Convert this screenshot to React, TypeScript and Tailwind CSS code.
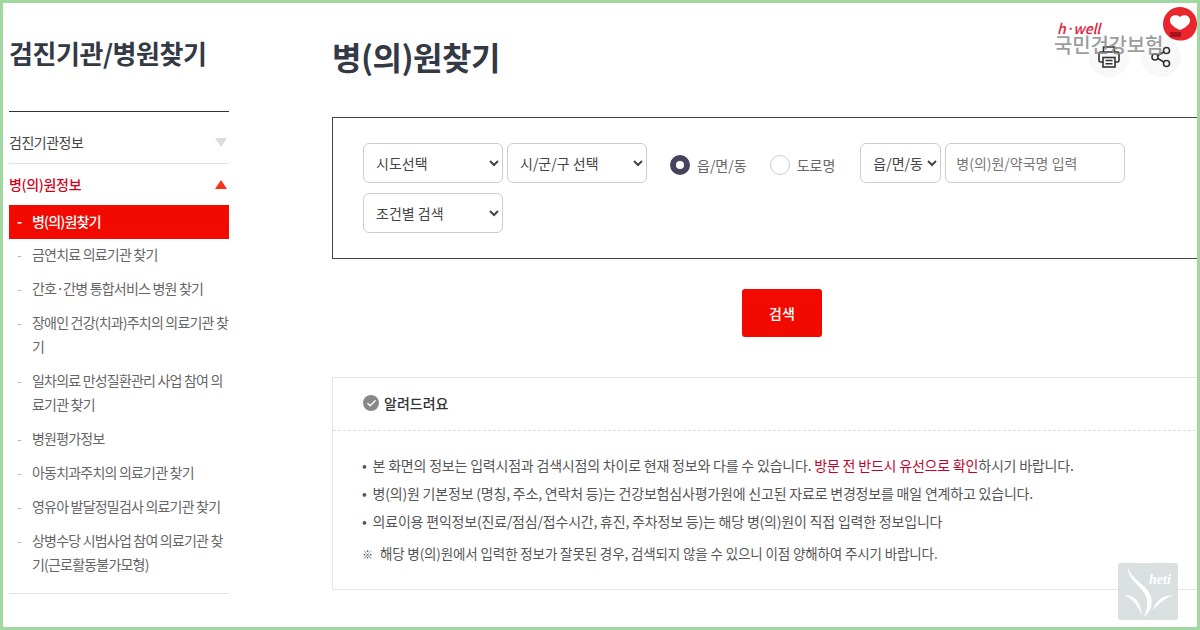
import React from 'react';
import { Check } from 'lucide-react';

const subMenu = [
  '금연치료 의료기관 찾기',
  '간호·간병 통합서비스 병원 찾기',
  '장애인 건강(치과)주치의 의료기관 찾기',
  '일차의료 만성질환관리 사업 참여 의료기관 찾기',
  '병원평가정보',
  '아동치과주치의 의료기관 찾기',
  '영유아 발달정밀검사 의료기관 찾기',
  '상병수당 시범사업 참여 의료기관 찾기(근로활동불가모형)',
];

function Sidebar() {
  return (
    <aside className="w-[220px] shrink-0">
      <h2 className="flex h-[108px] items-start pt-[30px] text-[26px] leading-[40px] font-bold tracking-[-0.45px] whitespace-nowrap text-[#333a45]">
        검진기관/병원찾기
      </h2>
      <div className="border-t border-[#333]">
        <div className="flex h-[52px] items-center justify-between border-b border-[#e2e2e2] pt-[10px] pr-[2px] text-[14px] tracking-[-0.5px] text-[#444]">
          <span>검진기관정보</span>
          <span className="h-0 w-0 border-x-[6px] border-t-[9px] border-x-transparent border-t-[#dcdcdc]" />
        </div>
        <div className="flex h-[41px] items-center justify-between pr-[2px] text-[14px] font-medium tracking-[-0.3px] text-[#d0021b]">
          <span>병(의)원정보</span>
          <span className="h-0 w-0 border-x-[6px] border-b-[9px] border-x-transparent border-b-[#f5321e]" />
        </div>
        <div className="flex h-[34px] items-center bg-[#f20a00] pb-[2px] pl-[8px] text-[14px] font-medium tracking-[-0.8px] text-white">
          <span className="w-[15px] font-bold">-</span>
          <span>병(의)원찾기</span>
        </div>
        <ul className="border-b border-[#e2e2e2] pb-[10px]">
          {subMenu.map((item) => (
            <li key={item} className="flex pt-[3px] pb-[7px] pl-[8px] text-[14px] leading-[24px] tracking-[-0.8px] text-[#666]">
              <span className="w-[15px] shrink-0 text-[#bbb]">-</span>
              <span className="break-all">{item}</span>
            </li>
          ))}
        </ul>
      </div>
    </aside>
  );
}

function IconButton({ children }: { children: React.ReactNode }) {
  return (
    <div className="flex h-[40px] w-[40px] items-center justify-center rounded-full bg-[#f8f8f9]">
      {children}
    </div>
  );
}

function PrintIcon() {
  return (
    <svg width="24" height="24" viewBox="0 0 24 24" fill="none" stroke="#333" strokeWidth="1.6">
      <path d="M6.5 7V2h11v5" />
      <path d="M6 17H3.5A1.5 1.5 0 0 1 2 15.5v-7A1.5 1.5 0 0 1 3.5 7h17A1.5 1.5 0 0 1 22 8.500v7a1.500 1.500 0 0 1-1.500 1.500H18" />
      <rect x="6" y="12.500" width="12" height="9.500" />
      <path d="M8.500 15.500h7M8.500 18.800h7" />
    </svg>
  );
}

function ShareIcon() {
  return (
    <svg width="22" height="22" viewBox="0 0 22 22" fill="none" stroke="#333" strokeWidth="1.6">
      <circle cx="16.5" cy="4.5" r="3" />
      <circle cx="5" cy="11" r="3" />
      <circle cx="16.5" cy="17.5" r="3" />
      <path d="M7.7 9.5 13.9 6M7.7 12.5l6.2 3.5" />
    </svg>
  );
}

function SearchBox() {
  const field = 'h-[40px] rounded-[6px] border border-[#ccc] bg-white text-[14px] text-[#444]';
  return (
    <div className="w-[880px] border border-[#444] px-[30px] pt-[25px] pb-[25px]">
      <div className="flex flex-wrap items-center gap-x-[4px] gap-y-[10px]">
        <select className={`${field} w-[140px] pl-[8px]`}>
          <option>시도선택</option>
        </select>
        <select className={`${field} w-[140px] pl-[8px]`}>
          <option>시/군/구 선택</option>
        </select>
        <label className="mt-[4px] ml-[19px] flex items-center text-[14px] text-[#666]">
          <span className="h-[20px] w-[20px] rounded-full border-[6px] border-[#47435c] bg-white" />
          <span className="ml-[7px]">읍/면/동</span>
        </label>
        <label className="mt-[4px] ml-[19px] flex items-center text-[14px] text-[#666]">
          <span className="h-[20px] w-[20px] rounded-full border border-[#ccc] bg-white" />
          <span className="ml-[7px]">도로명</span>
        </label>
        <select className={`${field} ml-[21px] w-[81px] pl-[8px]`}>
          <option>읍/면/동</option>
        </select>
        <input
          className={`${field} w-[180px] px-[10px] placeholder:text-[#777]`}
          placeholder="병(의)원/약국명 입력"
        />
        <select className={`${field} w-[140px] pl-[8px]`}>
          <option>조건별 검색</option>
        </select>
      </div>
    </div>
  );
}

function Notice() {
  return (
    <div className="mt-[40px] h-[213px] w-[880px] border border-[#e5e5e5]">
      <div className="flex h-[53px] items-center gap-[5px] border-b border-dashed border-[#ddd] pb-[2px] pl-[30px] text-[14px] font-medium text-[#333]">
        <span className="flex h-[16px] w-[16px] items-center justify-center rounded-full bg-[#888] text-white">
          <Check size={11} strokeWidth={3} />
        </span>
        알려드려요
      </div>
      <ul className="pt-[20px] pl-[29px] text-[14px] leading-[28px] tracking-[-0.2px] text-[#555]">
        <li>
          <span className="mr-[6px]">•</span>본 화면의 정보는 입력시점과 검색시점의 차이로 현재 정보와 다를 수 있습니다.{' '}
          <span className="text-[#c4002b]">방문 전 반드시 유선으로 확인</span>하시기 바랍니다.
        </li>
        <li>
          <span className="mr-[6px]">•</span>병(의)원 기본정보 (명칭, 주소, 연락처 등)는 건강보험심사평가원에 신고된 자료로 변경정보를 매일 연계하고 있습니다.
        </li>
        <li>
          <span className="mr-[6px]">•</span>의료이용 편익정보(진료/점심/접수시간, 휴진, 주차정보 등)는 해당 병(의)원이 직접 입력한 정보입니다
        </li>
        <li className="mt-[4px] text-[13.5px] tracking-[-0.13px]">
          <span className="mr-[7px] text-[11px]">※</span>해당 병(의)원에서 입력한 정보가 잘못된 경우, 검색되지 않을 수 있으니 이점 양해하여 주시기 바랍니다.
        </li>
      </ul>
    </div>
  );
}

function Watermark() {
  return (
    <svg className="absolute top-[560px] left-[1115px]" width="60" height="57" viewBox="0 0 60 57">
      <rect width="60" height="57" rx="2" fill="#d6dddd" fillOpacity="0.9" />
      <path d="M10 5c0 14 16 18 19 32 1 6-1 12-3 17 7-6 9-13 7-20C30 22 15 18 10 5Z" fill="#fff" />
      <path d="M6 32c10 0 17 6 18 21-4-11-9-17-18-21Z" fill="#fff" />
      <path d="M56 32c-10 0-18 5-21 15 6-7 12-12 21-15Z" fill="#fff" />
      <text x="31" y="21" fontSize="14" fontStyle="italic" fontWeight="700" fill="#fff" fontFamily="'Liberation Serif', serif">heti</text>
    </svg>
  );
}

function Logo() {
  return (
    <div className="pointer-events-none absolute top-[4px] right-0 h-[60px] w-[145px]">
      <div className="absolute top-[14px] left-[5px] text-[14px] leading-[14px] font-medium tracking-[-0.2px] text-[#e0243c] italic">h·well</div>
      <div className="absolute top-[28px] left-[2px] text-[20px] leading-[20px] font-medium tracking-[-0.2px] whitespace-nowrap text-[#8a8a8a]/85">국민건강보험</div>
      <svg className="absolute top-0 right-0" width="34" height="34" viewBox="0 0 34 34">
        <path d="M17 0a17 17 0 0 1 8 32c-5 2-10 2-14 .5C4 30 0 24 0 17A17 17 0 0 1 17 0Z" fill="#e8262c" />
        <path d="M17 10c3-3 10-2 10 3.500 0 4-5 7.500-10 9.500-5-2-10-5.500-10-9.500C7 8 14 7 17 10Z" fill="#fff" />
        <rect x="7" y="25" width="11" height="5" fill="#a31320" />
      </svg>
    </div>
  );
}

export default function App() {
  return (
    <div className="relative h-[630px] w-[1200px] overflow-hidden border-[3px] border-[#a0d8a0] bg-white font-['Noto_Sans_CJK_KR','Noto_Sans',sans-serif]">
      <div className="flex pl-[6px]">
        <Sidebar />
        <main className="ml-[103px] min-w-0 flex-1">
          <div className="flex h-[114px] items-start justify-between">
            <h1 className="mt-[31px] text-[32px] leading-[44px] font-bold tracking-[-0.5px] text-[#333a45]">병(의)원찾기</h1>
            <div className="mt-[34px] mr-[16px] flex gap-[12px]">
              <IconButton>
                <PrintIcon />
              </IconButton>
              <IconButton>
                <ShareIcon />
              </IconButton>
            </div>
          </div>
          <SearchBox />
          <div className="mt-[30px] flex w-[900px] justify-center">
            <button className="h-[48px] w-[80px] rounded-[3px] bg-[#f20a00] text-[14px] font-medium text-white">검색</button>
          </div>
          <Notice />
        </main>
      </div>
      <Logo />
      <Watermark />
    </div>
  );
}
